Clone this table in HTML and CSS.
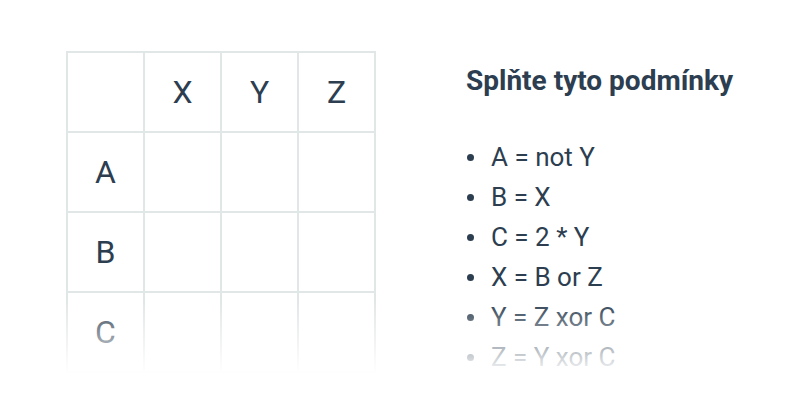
FILE: index.html
```html
<!DOCTYPE html>
<html lang="cs">
<head>
<meta charset="utf-8">
<link rel="stylesheet" href="styles.css">
</head>
<body>
<main class="page">
  <table class="grid">
    <tr><td></td><td>X</td><td>Y</td><td>Z</td></tr>
    <tr><td>A</td><td></td><td></td><td></td></tr>
    <tr><td>B</td><td></td><td></td><td></td></tr>
    <tr><td>C</td><td></td><td></td><td></td></tr>
  </table>
  <section class="rules">
    <h2 class="title">Splňte tyto podmínky</h2>
    <ul class="list">
      <li>A = not Y</li>
      <li>B = X</li>
      <li>C = 2 * Y</li>
      <li>X = B or Z</li>
      <li>Y = Z xor C</li>
      <li>Z = Y xor C</li>
    </ul>
  </section>
  <div class="fade"></div>
</main>
</body>
</html>
```

FILE: styles.css
```css
html, body {
  margin: 0;
  padding: 0;
  background: #fff;
  overflow: hidden;
}
body {
  font-family: Roboto, "Liberation Sans", sans-serif;
  color: #2c3e50;
  width: 800px;
  height: 400px;
}
.page {
  position: relative;
  height: 400px;
  display: flex;
  align-items: flex-start;
  padding: 51px 0 0 66px;
  box-sizing: border-box;
  gap: 90px;
}
.grid {
  border-collapse: collapse;
  flex: none;
}
.grid td {
  border: 2px solid #e1e6e6;
  width: 75px;
  height: 78px;
  padding: 0;
  text-align: center;
  vertical-align: middle;
  font-size: 32px;
  font-weight: 400;
}
.rules {
  padding-top: 12px;
}
.title {
  margin: 0;
  font-size: 28px;
  font-weight: 700;
  line-height: 36px;
}
.list {
  margin: 38px 0 0;
  padding: 0 0 0 1px;
  list-style: none;
  font-size: 26px;
  line-height: 40px;
}
.list li::before {
  content: "";
  display: inline-block;
  width: 7px;
  height: 7px;
  border-radius: 50%;
  background: currentColor;
  margin-right: 17px;
  vertical-align: 5px;
}
.fade {
  position: absolute;
  left: 0;
  right: 0;
  bottom: 0;
  height: 100px;
  background: linear-gradient(to bottom, rgba(255,255,255,0) 0, #fff 75px, #fff 100%);
}
```
